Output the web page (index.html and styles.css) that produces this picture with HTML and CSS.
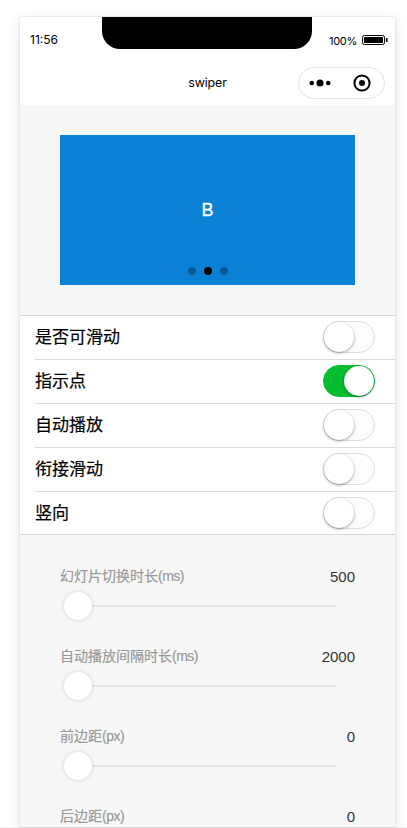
FILE: index.html
```html
<!DOCTYPE html>
<html lang="zh-CN">
<head>
<meta charset="utf-8">
<title>swiper</title>
<link rel="stylesheet" href="styles.css">
</head>
<body>
<main class="phone">
  <header class="header">
    <div class="status">
      <span class="time">11:56</span>
      <div class="notch"></div>
      <div class="power"><span>100%</span>
        <svg class="battery" width="26" height="10" viewBox="0 0 26 10"><rect x=".5" y=".5" width="22" height="9" rx="1.8" fill="none" stroke="#000"/><rect x="2" y="2" width="19" height="6" rx=".5"/><path d="M24 3h.8q.8 0 .8 .8v2.4q0 .8-.8 .8H24z"/></svg>
      </div>
    </div>
    <nav class="nav">
      <h1 class="title">swiper</h1>
      <div class="capsule">
        <svg width="22" height="8" viewBox="0 0 22 8"><circle cx="2.8" cy="4" r="2.3"/><circle cx="11" cy="4" r="3.6"/><circle cx="19.2" cy="4" r="2.3"/></svg>
        <svg width="18" height="18" viewBox="0 0 18 18"><circle cx="9" cy="9" r="7.6" fill="none" stroke="#000" stroke-width="2"/><circle cx="9" cy="9" r="3"/></svg>
      </div>
    </nav>
  </header>
  <section class="swiper">
    <span class="slide">B</span>
    <div class="dots"><i class="dot"></i><i class="dot active"></i><i class="dot"></i></div>
  </section>
  <section class="cells">
    <div class="cell"><span>是否可滑动</span><i class="switch"></i></div>
    <div class="cell"><span>指示点</span><i class="switch on"></i></div>
    <div class="cell"><span>自动播放</span><i class="switch"></i></div>
    <div class="cell"><span>衔接滑动</span><i class="switch"></i></div>
    <div class="cell"><span>竖向</span><i class="switch"></i></div>
  </section>
  <section class="sliders">
    <div class="setting"><div class="caption"><span>幻灯片切换时长<span class="unit">(ms)</span></span><b>500</b></div><div class="track"><i class="thumb"></i></div></div>
    <div class="setting"><div class="caption"><span>自动播放间隔时长<span class="unit">(ms)</span></span><b>2000</b></div><div class="track"><i class="thumb"></i></div></div>
    <div class="setting"><div class="caption"><span>前边距<span class="unit">(px)</span></span><b>0</b></div><div class="track"><i class="thumb"></i></div></div>
    <div class="setting"><div class="caption"><span>后边距<span class="unit">(px)</span></span><b>0</b></div></div>
  </section>
</main>
</body>
</html>
```
FILE: styles.css
```css
* { box-sizing: border-box; }
body {
  margin: 0;
  height: 828px;
  padding: 17px 12px 0 20px;
  overflow: hidden;
  background: linear-gradient(#eee, #eee) 0 827px / 100% 1px no-repeat #fff;
  font-family: "Liberation Sans", "Noto Sans CJK SC", sans-serif;
}
.phone {
  width: 375px;
  height: 810px;
  overflow: hidden;
  background: #f7f7f7;
  box-shadow: 0 0 2px rgba(0,0,0,.16), 0 4px 14px rgba(0,0,0,.1);
}
.header { height: 88px; background: #fff; font-family: Inter, sans-serif; }
.status {
  height: 44px;
  display: grid;
  grid-template-columns: 82px 210px 83px;
}
.time { padding: 15px 0 0 10px; font-size: 12px; line-height: 16px; }
.notch { height: 32px; background: #000; border-radius: 0 0 18px 18px; }
.power {
  display: flex;
  justify-content: flex-end;
  align-items: center;
  gap: 5px;
  height: 16px;
  margin-top: 16px;
  padding-right: 7px;
  font-size: 11px;
  letter-spacing: -.3px;
}
.battery { margin-top: -3px; }
.nav {
  height: 44px;
  display: grid;
  grid-template-columns: 1fr auto 1fr;
  align-items: center;
}
.title {
  grid-column: 2;
  margin: 0 0 1px;
  font-size: 12.5px;
  font-weight: 400;
  line-height: 18px;
  letter-spacing: -.2px;
}
.capsule {
  justify-self: end;
  display: flex;
  align-items: center;
  justify-content: space-between;
  width: 87px;
  height: 32px;
  margin-right: 10px;
  padding: 0 13px 0 10px;
  border: 1px solid #e4e4e4;
  border-radius: 16px;
}
.swiper {
  display: flex;
  flex-direction: column;
  align-items: center;
  height: 150px;
  margin: 30px 40px;
  background: #0a81d4;
  color: #fff;
}
.slide { margin-top: 65px; font-size: 18px; line-height: 20px; -webkit-text-stroke: .3px; }
.dots { display: flex; gap: 8px; margin-top: 47px; }
.dot { width: 8px; height: 8px; border-radius: 50%; background: rgba(0,0,0,.3); }
.dot.active { background: #000; }
.cells {
  height: 220px;
  padding-left: 15px;
  background: #fff;
  border-top: 1px solid #d9d9d9;
  border-bottom: 1px solid #d9d9d9;
}
.cell {
  display: flex;
  align-items: flex-start;
  justify-content: space-between;
  height: 44px;
  padding: 5px 20px 0 0;
  border-top: 1px solid #d9d9d9;
  font-size: 17px;
  line-height: 33px;
  -webkit-text-stroke: .2px;
}
.cell:first-child { height: 43px; border-top: 0; }
.cell:last-child { height: 43px; }
.switch {
  display: flex;
  width: 52px;
  height: 32px;
  border: 1px solid #dfdfdf;
  border-radius: 16px;
  background: #fdfdfd;
}
.switch::before {
  content: "";
  width: 30px;
  height: 30px;
  border-radius: 50%;
  background: #fff;
  box-shadow: 0 1px 3px rgba(0,0,0,.4);
}
.switch.on { justify-content: flex-end; background: #04be2f; border-color: #04be2f; }
.sliders { padding: 29px 40px 0; }
.setting { height: 80px; }
.caption {
  display: flex;
  align-items: center;
  justify-content: space-between;
  height: 24px;
  font-size: 14px;
  line-height: 24px;
  color: #999;
  -webkit-text-stroke: .2px;
}
.caption b {
  padding-top: 1px;
  font-size: 15px;
  font-weight: 400;
  color: #353535;
  -webkit-text-stroke: 0;
}
.unit { letter-spacing: -.5px; }
.track {
  display: flex;
  align-items: center;
  height: 2px;
  margin: 17px 18px 0;
  border-radius: 1px;
  background: #e6e6e6;
}
.thumb {
  flex: none;
  width: 28px;
  height: 28px;
  margin-left: -14px;
  border-radius: 50%;
  background: #fff;
  box-shadow: 0 0 4px rgba(0,0,0,.16);
}
```
